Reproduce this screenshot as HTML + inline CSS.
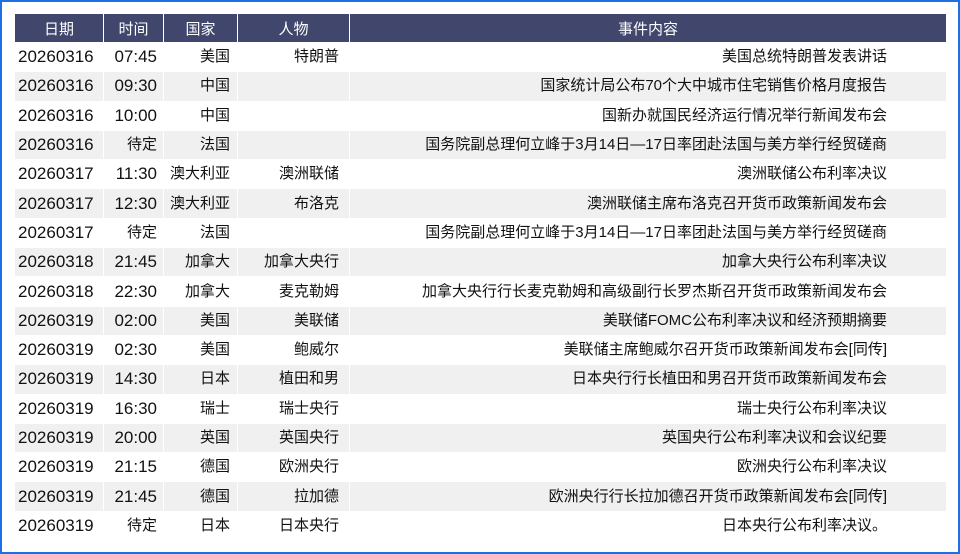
<!DOCTYPE html>
<html><head><meta charset="utf-8"><style>
html,body{margin:0;padding:0;}
body{width:960px;height:554px;box-sizing:border-box;border:2px solid #1c6fe6;background:#fff;position:relative;overflow:hidden;font-family:"Liberation Sans","Noto Sans CJK SC",sans-serif;}
table{position:absolute;left:12px;top:12px;width:933px;border-collapse:collapse;table-layout:fixed;font-size:15px;color:#111;}
th{background:#40466c;color:#fff;font-weight:normal;height:28px;padding:0;border:1px solid #fff;border-top:none;text-align:center;}
td{height:28.3px;padding:0;border:1px solid #fff;text-align:right;white-space:nowrap;overflow:hidden;line-height:20px;}
tr:nth-child(even) td{background:#f0f0f0;}
td.d{text-align:left;padding-left:3px;font-size:17px;}
td.t{padding-right:6px;font-size:17px;}
td.t.z{font-size:15px;}
td.c{padding-right:7px;}
td.p{padding-right:10px;}
td.e{padding-right:59px;}
</style></head><body>
<table>
<colgroup><col style="width:89px"><col style="width:60px"><col style="width:74px"><col style="width:112px"><col></colgroup>
<thead><tr><th>日期</th><th>时间</th><th>国家</th><th>人物</th><th>事件内容</th></tr></thead>
<tbody>
<tr><td class="d">20260316</td><td class="t">07:45</td><td class="c">美国</td><td class="p">特朗普</td><td class="e">美国总统特朗普发表讲话</td></tr>
<tr><td class="d">20260316</td><td class="t">09:30</td><td class="c">中国</td><td class="p"></td><td class="e">国家统计局公布70个大中城市住宅销售价格月度报告</td></tr>
<tr><td class="d">20260316</td><td class="t">10:00</td><td class="c">中国</td><td class="p"></td><td class="e">国新办就国民经济运行情况举行新闻发布会</td></tr>
<tr><td class="d">20260316</td><td class="t z">待定</td><td class="c">法国</td><td class="p"></td><td class="e">国务院副总理何立峰于3月14日—17日率团赴法国与美方举行经贸磋商</td></tr>
<tr><td class="d">20260317</td><td class="t">11:30</td><td class="c">澳大利亚</td><td class="p">澳洲联储</td><td class="e">澳洲联储公布利率决议</td></tr>
<tr><td class="d">20260317</td><td class="t">12:30</td><td class="c">澳大利亚</td><td class="p">布洛克</td><td class="e">澳洲联储主席布洛克召开货币政策新闻发布会</td></tr>
<tr><td class="d">20260317</td><td class="t z">待定</td><td class="c">法国</td><td class="p"></td><td class="e">国务院副总理何立峰于3月14日—17日率团赴法国与美方举行经贸磋商</td></tr>
<tr><td class="d">20260318</td><td class="t">21:45</td><td class="c">加拿大</td><td class="p">加拿大央行</td><td class="e">加拿大央行公布利率决议</td></tr>
<tr><td class="d">20260318</td><td class="t">22:30</td><td class="c">加拿大</td><td class="p">麦克勒姆</td><td class="e">加拿大央行行长麦克勒姆和高级副行长罗杰斯召开货币政策新闻发布会</td></tr>
<tr><td class="d">20260319</td><td class="t">02:00</td><td class="c">美国</td><td class="p">美联储</td><td class="e">美联储FOMC公布利率决议和经济预期摘要</td></tr>
<tr><td class="d">20260319</td><td class="t">02:30</td><td class="c">美国</td><td class="p">鲍威尔</td><td class="e">美联储主席鲍威尔召开货币政策新闻发布会[同传]</td></tr>
<tr><td class="d">20260319</td><td class="t">14:30</td><td class="c">日本</td><td class="p">植田和男</td><td class="e">日本央行行长植田和男召开货币政策新闻发布会</td></tr>
<tr><td class="d">20260319</td><td class="t">16:30</td><td class="c">瑞士</td><td class="p">瑞士央行</td><td class="e">瑞士央行公布利率决议</td></tr>
<tr><td class="d">20260319</td><td class="t">20:00</td><td class="c">英国</td><td class="p">英国央行</td><td class="e">英国央行公布利率决议和会议纪要</td></tr>
<tr><td class="d">20260319</td><td class="t">21:15</td><td class="c">德国</td><td class="p">欧洲央行</td><td class="e">欧洲央行公布利率决议</td></tr>
<tr><td class="d">20260319</td><td class="t">21:45</td><td class="c">德国</td><td class="p">拉加德</td><td class="e">欧洲央行行长拉加德召开货币政策新闻发布会[同传]</td></tr>
<tr><td class="d">20260319</td><td class="t z">待定</td><td class="c">日本</td><td class="p">日本央行</td><td class="e">日本央行公布利率决议。</td></tr>
</tbody></table>
</body></html>
